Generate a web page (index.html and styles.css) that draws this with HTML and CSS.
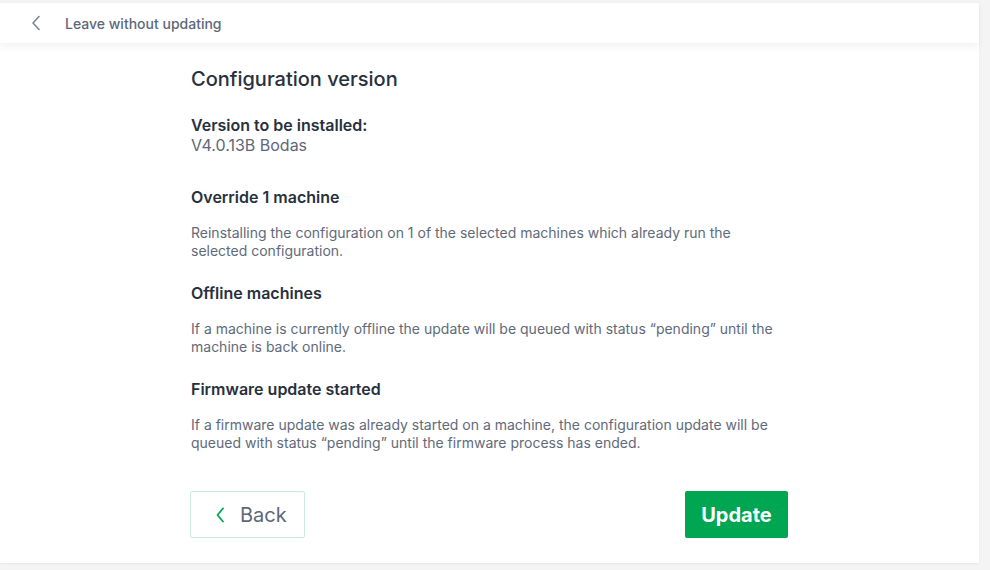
FILE: index.html
```html
<!DOCTYPE html>
<html>
<head>
<meta charset="utf-8">
<link rel="stylesheet" href="styles.css">
</head>
<body>
<div class="card">
  <header class="topbar">
    <svg class="chev" width="10" height="16" viewBox="0 0 10 16"><path d="M8 1.5 L2 8 L8 14.5" fill="none" stroke="#7a8494" stroke-width="1.6" stroke-linecap="round" stroke-linejoin="round"/></svg>
    <span class="leave">Leave without updating</span>
  </header>
  <main class="content">
    <h1 class="title">Configuration version</h1>
    <div class="version">
      <div class="vlabel">Version to be installed:</div>
      <div class="vvalue">V4.0.13B Bodas</div>
    </div>
    <section class="sect first">
      <h2>Override 1 machine</h2>
      <p>Reinstalling the configuration on 1 of the selected machines which already run the selected configuration.</p>
    </section>
    <section class="sect">
      <h2>Offline machines</h2>
      <p>If a machine is currently offline the update will be queued with status “pending” until the machine is back online.</p>
    </section>
    <section class="sect">
      <h2>Firmware update started</h2>
      <p>If a firmware update was already started on a machine, the configuration update will be queued with status “pending” until the firmware process has ended.</p>
    </section>
    <div class="actions">
      <button class="btn back"><svg width="10" height="16" viewBox="0 0 10 16"><path d="M8 1.5 L2.5 8 L8 14.5" fill="none" stroke="#00a651" stroke-width="1.8" stroke-linecap="round" stroke-linejoin="round"/></svg><span>Back</span></button>
      <button class="btn update">Update</button>
    </div>
  </main>
</div>
</body>
</html>
```
FILE: styles.css
```css
html, body { margin: 0; padding: 0; }
body {
  background: #f4f4f4;
  font-family: Inter, "Noto Sans", sans-serif;
  width: 990px;
  height: 570px;
  overflow: hidden;
}
.card {
  margin: 3px 0 0 0;
  width: 979px;
  height: 560px;
  background: #fff;
  box-shadow: 0 1px 2px rgba(0,0,0,0.06);
}
.topbar {
  height: 41px;
  display: flex;
  align-items: center;
  box-shadow: 0 3px 8px rgba(0,0,0,0.05);
  border-bottom: 1px solid #f4f5f6;
  box-sizing: border-box;
}
.chev { margin-left: 31px; margin-right: 24px; }
.leave { font-size: 14px; color: #5e6778; font-weight: 500; }
.content {
  width: 598px;
  margin-left: 190px;
  padding-top: 22px;
}
.title {
  margin: 0 0 0 1px;
  font-size: 20px;
  line-height: 26px;
  font-weight: 500;
  color: #28303d;
}
.version { margin: 24px 0 0 1px; }
.vlabel { font-size: 16px; font-weight: 600; color: #28303d; line-height: 19px; }
.vvalue { font-size: 16px; color: #5e6778; line-height: 20px; }
.sect { margin-left: 1px; margin-top: 23px; }
.sect.first { margin-top: 32px; }
.sect h2 { margin: 0; font-size: 16px; font-weight: 600; color: #28303d; line-height: 20px; }
.sect p { margin: 17px 0 0 0; font-size: 14px; line-height: 18px; color: #616a7a; width: 590px; }
.actions {
  margin-top: 39px;
  display: flex;
  justify-content: space-between;
}
.btn { font-family: inherit; cursor: pointer; height: 47px; border-radius: 2px; }
.back {
  width: 115px;
  background: #fff;
  border: 1px solid #c8ece0;
  display: flex;
  align-items: center;
  padding: 0 0 0 24px;
  gap: 15px;
  font-size: 20px;
  color: #5e6778;
}
.update {
  width: 103px;
  border: none;
  background: #00a651;
  color: #fff;
  font-size: 20px;
  font-weight: 700;
}
```
